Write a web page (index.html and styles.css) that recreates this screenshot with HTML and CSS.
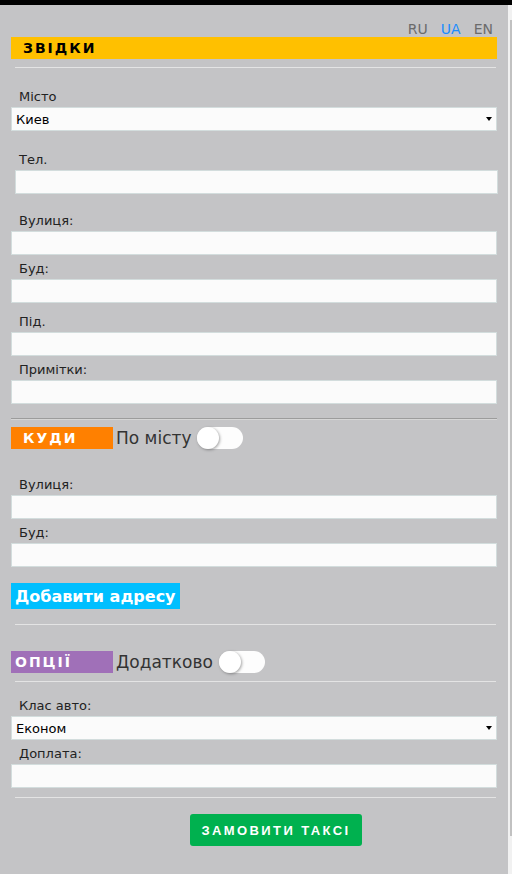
FILE: index.html
```html
<!DOCTYPE html>
<html lang="uk">
<head>
    <meta charset="UTF-8">
    <meta name="viewport" content="width=device-width, initial-scale=1.0">
    <title>Замовити таксі</title>
    <link rel="stylesheet" href="styles.css">
</head>
<body>

    <div class="top-bar"></div>

    <div class="screen">
        <div class="page">

            <!-- мова -->
            <div class="lang">
                <a href="#">RU</a>
                <a href="#" class="active">UA</a>
                <a href="#">EN</a>
            </div>

            <!-- звідки -->
            <div class="section-title from">ЗВІДКИ</div>
            <hr class="line">

            <div class="field mt-21">
                <label>Місто</label>
                <div class="select-wrap">
                    <select>
                        <option>Киев</option>
                    </select>
                </div>
            </div>

            <div class="field mt-21">
                <label>Тел.</label>
                <input type="text" class="phone">
            </div>

            <div class="field mt-19">
                <label>Вулиця:</label>
                <input type="text">
            </div>

            <div class="field mt-6">
                <label>Буд:</label>
                <input type="text">
            </div>

            <div class="field mt-11">
                <label>Під.</label>
                <input type="text">
            </div>

            <div class="field mt-6">
                <label>Примітки:</label>
                <input type="text">
            </div>

            <hr class="line dark">

            <!-- куди -->
            <div class="title-row route-row">
                <div class="section-title to">КУДИ</div>
                <span class="row-text">По місту</span>
                <div class="toggle"><span class="knob"></span></div>
            </div>

            <div class="field mt-28">
                <label>Вулиця:</label>
                <input type="text">
            </div>

            <div class="field mt-6">
                <label>Буд:</label>
                <input type="text">
            </div>

            <button class="add-address">Добавити адресу</button>

            <hr class="line after-add">

            <!-- опції -->
            <div class="title-row options-row">
                <div class="section-title options">ОПЦІЇ</div>
                <span class="row-text">Додатково</span>
                <div class="toggle"><span class="knob"></span></div>
            </div>

            <hr class="line after-options">

            <div class="field mt-16">
                <label>Клас авто:</label>
                <div class="select-wrap">
                    <select>
                        <option>Економ</option>
                    </select>
                </div>
            </div>

            <div class="field mt-6">
                <label>Доплата:</label>
                <input type="text">
            </div>

            <hr class="line after-extra">

            <button class="order-button">ЗАМОВИТИ ТАКСІ</button>

        </div>

        <!-- смуга прокрутки -->
        <div class="scroll-track">
            <div class="scroll-thumb"></div>
        </div>
    </div>

</body>
</html>
```

FILE: styles.css
```css
body {
    margin: 0;
    height: 874px;
    overflow: hidden;
    background-color: #c4c4c6;
    font-family: "DejaVu Sans", Verdana, sans-serif;
    color: #222;
}

.top-bar {
    height: 5px;
    background-color: #000;
}

.screen {
    display: flex;
    height: 869px;
}

.page {
    flex: 1;
    min-width: 0;
    padding: 16px 11px 0 11px;
}

/* смуга прокрутки праворуч */
.scroll-track {
    flex: none;
    width: 4px;
    background-color: #f1f1f1;
    padding-top: 15px;
}

.scroll-thumb {
    margin-left: 2px;
    width: 2px;
    height: 816px;
    background-color: #c1c1c1;
}

/* перемикач мови */
.lang {
    display: flex;
    justify-content: flex-end;
    gap: 13px;
    padding-right: 4px;
    height: 16px;
    line-height: 16px;
    font-size: 14px;
}

.lang a {
    color: #6b6b6b;
    text-decoration: none;
}

.lang a.active {
    color: #1a8cff;
}

/* заголовки розділів */
.section-title {
    height: 22px;
    line-height: 22px;
    font-size: 14px;
    font-weight: bold;
    letter-spacing: 2px;
    box-sizing: border-box;
}

.section-title.from {
    background-color: #ffc000;
    color: #000;
    padding-left: 12px;
}

.section-title.to {
    width: 102px;
    background-color: #ff8000;
    color: #fff;
    padding-left: 12px;
}

.section-title.options {
    width: 102px;
    background-color: #a070b8;
    color: #fff;
    padding-left: 4px;
}

.title-row {
    display: flex;
    align-items: center;
}

.row-text {
    margin-left: 3px;
    margin-right: 6px;
    font-size: 17px;
    color: #333;
}

.route-row {
    margin-top: 7px;
}

.options-row {
    margin-top: 26px;
}

/* перемикач */
.toggle {
    width: 46px;
    height: 22px;
    border-radius: 11px;
    background-color: #fdfdfd;
}

.toggle .knob {
    display: block;
    width: 22px;
    height: 22px;
    border-radius: 50%;
    background-color: #fff;
    box-shadow: 1px 1px 3px rgba(0, 0, 0, 0.35);
}

/* лінії */
.line {
    border: none;
    border-top: 1px solid #e4e4e4;
    height: 0;
    margin: 8px 1px 0 4px;
}

.line.dark {
    border-top: 1px solid #9c9c9c;
    border-bottom: 1px solid #d6d6d6;
    margin: 14px 0 0 0;
}

.line.after-add {
    margin-top: 15px;
}

.line.after-options {
    margin-top: 8px;
}

.line.after-extra {
    margin-top: 9px;
}

/* поля форми */
.field label {
    display: block;
    padding-left: 8px;
    height: 16px;
    line-height: 16px;
    font-size: 13px;
    margin-bottom: 2px;
}

.field input,
.field select {
    display: block;
    width: 100%;
    height: 24px;
    margin: 0;
    padding: 0 4px;
    box-sizing: border-box;
    border: 1px solid #d3dddd;
    background-color: #fbfbfb;
    font-family: "DejaVu Sans", Verdana, sans-serif;
    font-size: 13px;
    color: #000;
    outline: none;
}

.field input.phone {
    margin-left: 4px;
    width: 483px;
}

.field select {
    appearance: none;
    -webkit-appearance: none;
    border-radius: 0;
}

.select-wrap {
    position: relative;
}

/* стрілка списку */
.select-wrap::after {
    content: "";
    position: absolute;
    right: 5px;
    top: 10px;
    border-left: 3px solid transparent;
    border-right: 3px solid transparent;
    border-top: 4px solid #000;
}

.mt-6 { margin-top: 6px; }
.mt-11 { margin-top: 11px; }
.mt-16 { margin-top: 16px; }
.mt-19 { margin-top: 19px; }
.mt-21 { margin-top: 21px; }
.mt-28 { margin-top: 28px; }

/* кнопки */
.add-address {
    display: block;
    margin-top: 16px;
    height: 26px;
    padding: 0 4px;
    border: none;
    background-color: #00bfff;
    color: #fff;
    font-family: "DejaVu Sans", Verdana, sans-serif;
    font-size: 16px;
    font-weight: bold;
    cursor: pointer;
}

.order-button {
    display: block;
    margin: 16px 0 0 179px;
    width: 172px;
    height: 32px;
    padding: 0;
    border: none;
    border-radius: 3px;
    background-color: #00b14f;
    color: #fff;
    font-family: "Liberation Sans", Arial, sans-serif;
    font-size: 13px;
    font-weight: bold;
    letter-spacing: 2.4px;
    cursor: pointer;
}
```
